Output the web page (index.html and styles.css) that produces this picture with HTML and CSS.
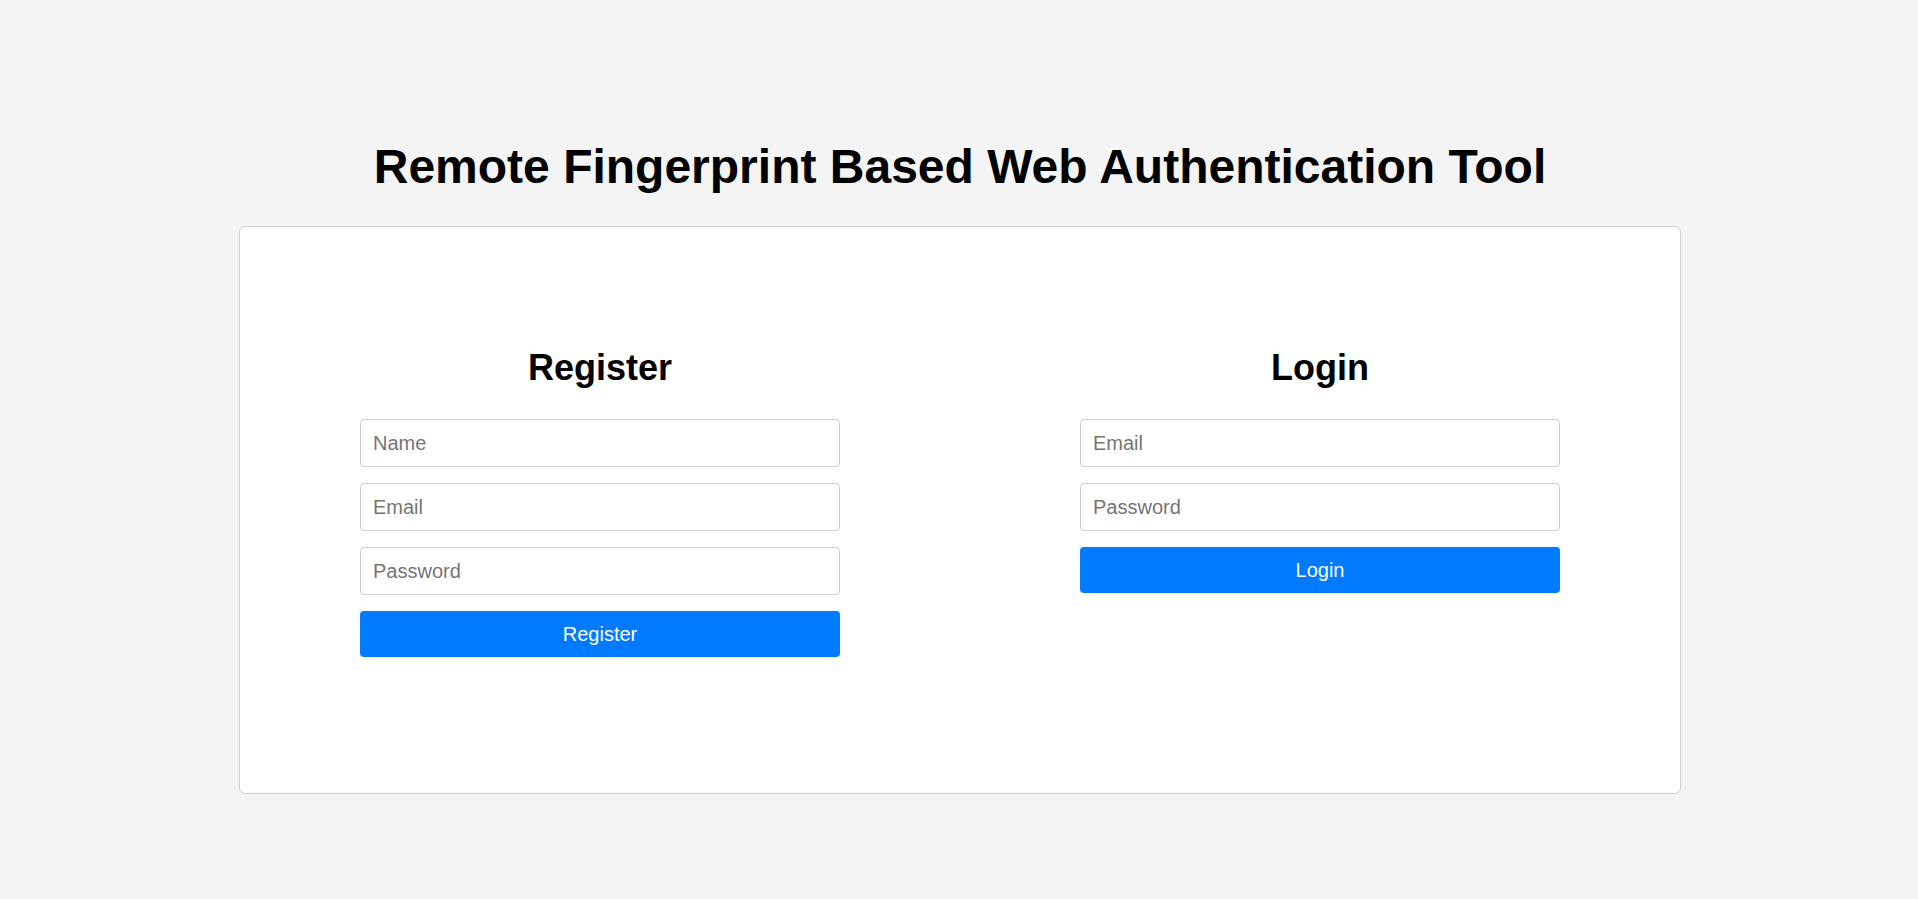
FILE: index.html
```html
<!DOCTYPE html>
<html lang="en">
<head>
<meta charset="utf-8">
<title>Remote Fingerprint Based Web Authentication Tool</title>
<link rel="stylesheet" href="styles.css">
</head>
<body>
<h1 class="title">Remote Fingerprint Based Web Authentication Tool</h1>
<div class="card">
  <div class="column">
    <form class="form">
      <h2 class="form-title">Register</h2>
      <input class="field" type="text" placeholder="Name">
      <input class="field" type="email" placeholder="Email">
      <input class="field" type="password" placeholder="Password">
      <button class="btn" type="button">Register</button>
    </form>
  </div>
  <div class="column">
    <form class="form">
      <h2 class="form-title">Login</h2>
      <input class="field" type="email" placeholder="Email">
      <input class="field" type="password" placeholder="Password">
      <button class="btn" type="button">Login</button>
    </form>
  </div>
</div>
</body>
</html>
```
FILE: styles.css
```css
html, body {
  margin: 0;
  padding: 0;
}
body {
  background: #f4f4f4;
  font-family: "Liberation Sans", Arial, sans-serif;
  color: #000;
  padding: 139px 0 0 2px;
}
.title {
  margin: 0 0 32px;
  font-size: 48px;
  font-weight: bold;
  text-align: center;
  line-height: normal;
}
.card {
  box-sizing: border-box;
  width: 1442px;
  margin: 0 auto;
  background: #fff;
  border: 1px solid #cfcfcf;
  border-radius: 6px;
  display: flex;
  padding: 120px 0 136px;
}
.column {
  flex: 1;
  display: flex;
  justify-content: center;
  align-items: flex-start;
}
.form {
  width: 480px;
  display: flex;
  flex-direction: column;
  gap: 16px;
}
.form-title {
  margin: 0 0 14px;
  font-size: 36px;
  font-weight: bold;
  text-align: center;
  line-height: normal;
}
.field {
  box-sizing: border-box;
  height: 48px;
  width: 100%;
  border: 1px solid #cccccc;
  border-radius: 4px;
  padding: 0 12px;
  font-family: "Liberation Sans", Arial, sans-serif;
  font-size: 20px;
  color: #000;
  background: #fff;
  outline: none;
}
.field::placeholder {
  color: #757575;
}
.btn {
  box-sizing: border-box;
  height: 46px;
  width: 100%;
  border: none;
  border-radius: 4px;
  background: #007bff;
  color: #fff;
  font-family: "Liberation Sans", Arial, sans-serif;
  font-size: 20px;
  cursor: pointer;
}
```
